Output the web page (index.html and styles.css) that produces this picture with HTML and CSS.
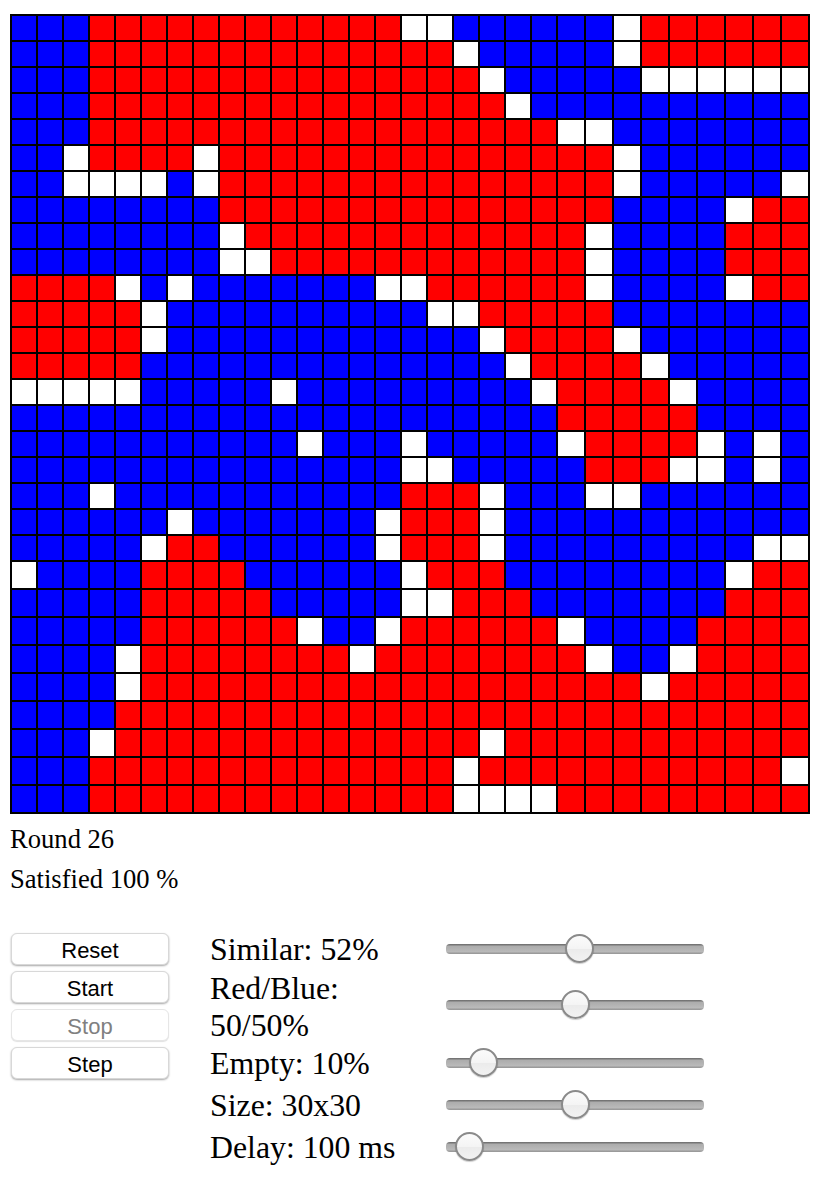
FILE: index.html
```html
<!DOCTYPE html>
<html>
<head>
    <title>Segregation</title>
    <link rel="stylesheet" href="styles.css">
</head>
<body>
    <div id="grid" class="grid"></div>

    <p class="stat">Round 26</p>
    <p class="stat">Satisfied 100 %</p>

    <div class="controls">
        <div class="buttons">
            <button class="btn" type="button">Reset</button>
            <button class="btn" type="button">Start</button>
            <button class="btn" type="button" disabled>Stop</button>
            <button class="btn" type="button">Step</button>
        </div>
        <div class="sliders">
            <label class="slider-label" for="similar">Similar: 52%</label>
            <input class="slider" type="range" id="similar" min="0" max="100" value="52">
            <label class="slider-label slider-label-wrap" for="ratio">Red/Blue: 50/50%</label>
            <input class="slider" type="range" id="ratio" min="0" max="100" value="50">
            <label class="slider-label" for="empty">Empty: 10%</label>
            <input class="slider" type="range" id="empty" min="0" max="100" value="10">
            <label class="slider-label" for="size">Size: 30x30</label>
            <input class="slider" type="range" id="size" min="10" max="50" value="30">
            <label class="slider-label" for="delay">Delay: 100 ms</label>
            <input class="slider" type="range" id="delay" min="0" max="2500" value="100">
        </div>
    </div>

    <script src="script.js"></script>
</body>
</html>
```

FILE: styles.css
```css
body {
    font-family: "Liberation Serif", "Times New Roman", serif;
    margin: 0;
    padding: 14px 10px 0;
    color: #000;
    background-color: #fff;
}

/* 21 narrow tracks then 9 wider ones, the board was scaled to fit */
.grid {
    display: grid;
    grid-template-columns: repeat(21, 24px) repeat(9, 26px);
    grid-template-rows: repeat(21, 24px) repeat(9, 26px);
    gap: 2px;
    width: max-content;
    padding: 2px;
    background-color: #000;
}

.cell-r {
    background-color: #f00;
}

.cell-b {
    background-color: #00f;
}

.cell-w {
    background-color: #fff;
}

.stat {
    font-size: 26.6px;
    line-height: 40px;
    margin: 0;
}

.stat:first-of-type {
    margin-top: 5px;
}

.controls {
    display: flex;
    margin-top: 31px;
}

.buttons {
    display: flex;
    flex-direction: column;
    gap: 6px;
    width: 160px;
    padding-top: 3px;
    margin-right: 40px;
}

.btn {
    font-family: "Liberation Sans", Arial, sans-serif;
    font-size: 22px;
    height: 32px;
    padding: 3px 0 0;
    margin-left: 1px;
    width: 158px;
    color: #000;
    background-color: #fff;
    border: 1px solid #d8d8d8;
    border-radius: 6px;
    box-shadow: 0 1px 2px rgba(0, 0, 0, 0.35);
}

.btn:disabled {
    color: #808080;
    border-color: #e6e6e6;
    box-shadow: 0 1px 1px rgba(0, 0, 0, 0.12);
}

.sliders {
    display: grid;
    grid-template-columns: 236px 258px;
    grid-template-rows: 38px 74px 42px 42px 42px;
    align-items: center;
}

.slider-label {
    font-size: 31.8px;
    line-height: 37px;
    padding-right: 40px;
}

.slider-label-wrap {
    padding-top: 4px;
}

.slider {
    -webkit-appearance: none;
    appearance: none;
    width: 258px;
    height: 30px;
    margin: 0;
    background: transparent;
}

.slider::-webkit-slider-runnable-track {
    height: 10px;
    border-radius: 4px;
    background: linear-gradient(#666, #adadad 25%, #b9b9b9 75%, #939393);
}

.slider::-webkit-slider-thumb {
    -webkit-appearance: none;
    appearance: none;
    width: 29px;
    height: 29px;
    margin-top: -10px;
    border: 2px solid #8a8a8a;
    border-radius: 50%;
    background: linear-gradient(#fbfbfb, #f4f4f4 50%, #ebebeb 52%, #f2f2f2);
    box-shadow: 0 1px 1px rgba(0, 0, 0, 0.2);
}
```

FILE: script.js
```js
// r = red, b = blue, w = empty
const rows = [
    'bbbrrrrrrrrrrrrwwbbbbbbwrrrrrr',
    'bbbrrrrrrrrrrrrrrwbbbbbwrrrrrr',
    'bbbrrrrrrrrrrrrrrrwbbbbbwwwwww',
    'bbbrrrrrrrrrrrrrrrrwbbbbbbbbbb',
    'bbbrrrrrrrrrrrrrrrrrrwwbbbbbbb',
    'bbwrrrrwrrrrrrrrrrrrrrrwbbbbbb',
    'bbwwwwbwrrrrrrrrrrrrrrrwbbbbbw',
    'bbbbbbbbrrrrrrrrrrrrrrrbbbbwrr',
    'bbbbbbbbwrrrrrrrrrrrrrwbbbbrrr',
    'bbbbbbbbwwrrrrrrrrrrrrwbbbbrrr',
    'rrrrwbwbbbbbbbwwrrrrrrwbbbbwrr',
    'rrrrrwbbbbbbbbbbwwrrrrrbbbbbbb',
    'rrrrrwbbbbbbbbbbbbwrrrrwbbbbbb',
    'rrrrrbbbbbbbbbbbbbbwrrrrwbbbbb',
    'wwwwwbbbbbwbbbbbbbbbwrrrrwbbbb',
    'bbbbbbbbbbbbbbbbbbbbbrrrrrbbbb',
    'bbbbbbbbbbbwbbbwbbbbbwrrrrwbwb',
    'bbbbbbbbbbbbbbbwwbbbbbrrrwwbwb',
    'bbbwbbbbbbbbbbbrrrwbbbwwbbbbbb',
    'bbbbbbwbbbbbbbwrrrwbbbbbbbbbbb',
    'bbbbbwrrbbbbbbwrrrwbbbbbbbbbww',
    'wbbbbrrrrbbbbbbwrrrbbbbbbbbwrr',
    'bbbbbrrrrrbbbbbwwrrrbbbbbbbrrr',
    'bbbbbrrrrrrwbbwrrrrrrwbbbbrrrr',
    'bbbbwrrrrrrrrwrrrrrrrrwbbwrrrr',
    'bbbbwrrrrrrrrrrrrrrrrrrrwrrrrr',
    'bbbbrrrrrrrrrrrrrrrrrrrrrrrrrr',
    'bbbwrrrrrrrrrrrrrrwrrrrrrrrrrr',
    'bbbrrrrrrrrrrrrrrwrrrrrrrrrrrw',
    'bbbrrrrrrrrrrrrrrwwwwrrrrrrrrr'
];

const grid = document.getElementById('grid');

rows.forEach(row => {
    for (const c of row) {
        const cell = document.createElement('div');
        cell.className = 'cell-' + c;
        grid.appendChild(cell);
    }
});
```
